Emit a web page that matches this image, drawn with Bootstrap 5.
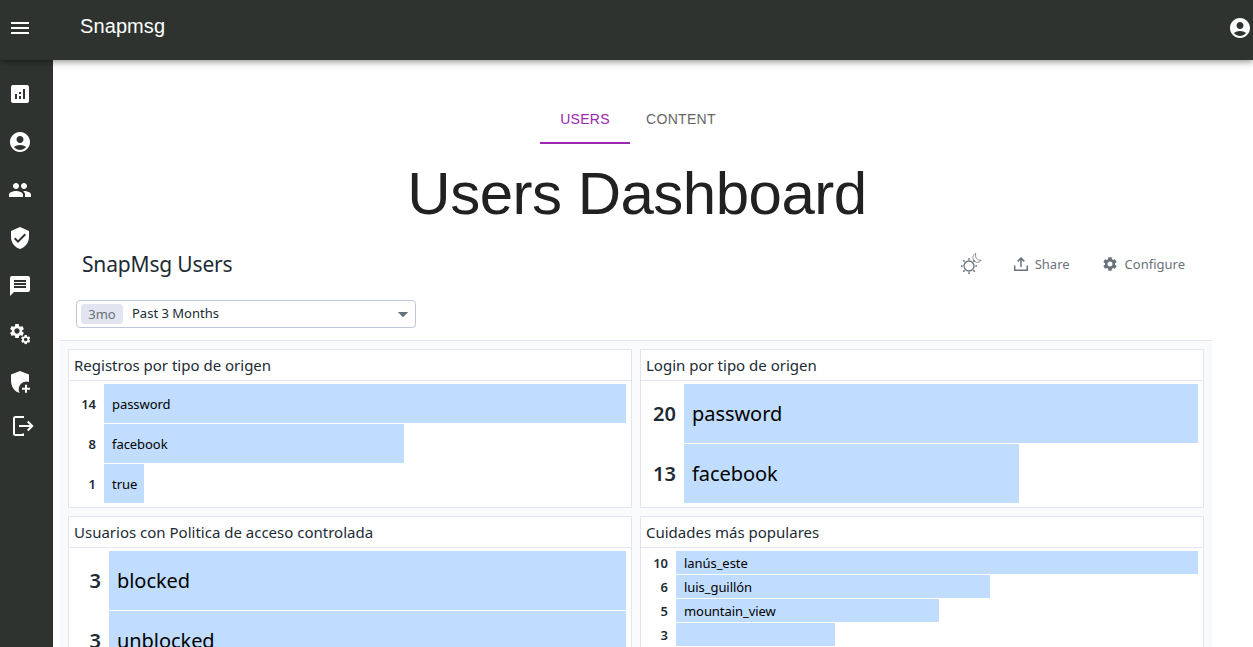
<!DOCTYPE html>
<html lang="es">
<head>
<meta charset="utf-8">
<meta name="viewport" content="width=device-width, initial-scale=1">
<title>Snapmsg</title>
<link href="https://cdn.jsdelivr.net/npm/bootstrap@5.3.0/dist/css/bootstrap.min.css" rel="stylesheet">
<style>
  body { font-family: "Liberation Sans", Arial, sans-serif; height: 647px; overflow: hidden; background: #fff; color: #212121; }
  .topbar { height: 60px; background: #2e332f; box-shadow: 0 2px 4px -1px rgba(0,0,0,.2), 0 4px 5px rgba(0,0,0,.14), 0 1px 10px rgba(0,0,0,.12); z-index: 2; padding: 0 1px 0 8px; }
  .topbar svg, .rail svg { width: 24px; height: 24px; fill: #fff; flex: none; display: block; }
  .topbar svg { margin-top: -4px; }
  .brand-title { font-size: 20px; line-height: 24px; letter-spacing: .1px; margin: -9px auto 0 48px; color: #fff; }
  .rail { width: 53px; background: #2e332f; padding: 22px 0 0 8px; gap: 24px; }
  .rail svg.exit { margin-top: -4px; overflow: visible; }
  .tab-item { font-size: 14px; line-height: 17.5px; letter-spacing: .3px; width: 90px; height: 50px; color: #666; border-bottom: 2px solid transparent; padding-top: 17px; text-align: center; }
  .tab-item.current { color: #9c27b0; border-color: #9c27b0; }
  .tab-item.wide { width: 102px; }
  .tabs { padding: 34px 0 0 487px; }
  .headline { font-size: 60px; line-height: 72px; font-weight: 400; letter-spacing: -.5px; margin: 14px 0 -1px; width: 1168px; text-align: center; }
  .dash { font-family: "Noto Sans", sans-serif; width: 1152px; margin-left: 7px; color: #1c2b34; }
  .dash-head { height: 112px; padding: 20px 27px 0 16px; border-bottom: 1px solid #e2e5ef; }
  .dash-name { font-size: 21px; line-height: 30px; letter-spacing: -.17px; padding-left: 6px; margin: 0; font-weight: 400; }
  .tool { font-size: 13px; line-height: 20px; color: #68727b; }
  .tool svg { display: block; overflow: visible; margin-right: 7px; }
  .tool.config { margin-left: 33px; }
  .tool.config svg { margin-right: 8px; }
  .daynight { display: block; overflow: visible; margin-right: 32px; }
  .range { width: 340px; height: 28px; border: 1px solid #c0c5de; border-radius: 4px; margin-top: 21px; padding: 0 7px 0 4px; font-size: 13px; }
  .range .tag { background: #e2e5ef; color: #68727b; border-radius: 4px; width: 42px; height: 20px; line-height: 20px; text-align: center; margin-right: 9px; }
  .board { background: #f9fafc; padding: 8px; display: grid; grid-template-columns: 564px 564px; grid-template-rows: 159px 159px; gap: 8px; height: 400px; }
  .panel { background: #fff; border: 1px solid #e2e5ef; padding-bottom: 3px; overflow: hidden; }
  .panel h2 { font-size: 15px; line-height: 30px; height: 31px; font-weight: 400; border-bottom: 1px solid #e2e5ef; margin: 0 0 3px; padding: 0 5px; }
  .rank { display: grid; grid-template-columns: var(--num) 1fr; height: var(--h); font-size: var(--fs); padding-right: 5px; line-height: var(--lh); }
  .rank b { font-weight: 600; text-align: right; padding-right: 8px; }
  .fillbar { background: #c0ddff; color: #000; height: calc(var(--h) - 1px); padding-left: 8px; white-space: nowrap; letter-spacing: -.06px; }
  .s40 { --h: 40px; --fs: 13px; --num: 35px; --lh: 41px; }
  .s60 { --h: 60px; --fs: 20px; --num: 43px; --lh: 59px; }
  .s60.slim { --num: 40px; }
  .s24 { --h: 24px; --fs: 13px; --num: 35px; --lh: 25px; }
</style>
</head>
<body class="d-flex flex-column">
<svg width="0" height="0" class="position-absolute" aria-hidden="true">
  <symbol id="user" viewBox="0 0 24 24"><path d="M12 2C6.48 2 2 6.48 2 12s4.48 10 10 10 10-4.48 10-10S17.52 2 12 2zm0 4c1.93 0 3.5 1.57 3.5 3.5S13.93 13 12 13s-3.5-1.57-3.5-3.5S10.07 6 12 6zm0 14c-2.03 0-4.43-.82-6.14-2.88C7.55 15.8 9.68 15 12 15s4.45.8 6.14 2.12C16.43 19.18 14.03 20 12 20z"/></symbol>
  <symbol id="gear" viewBox="2 2 20 20"><path d="M19.14 12.94c.04-.3.06-.61.06-.94 0-.32-.02-.64-.07-.94l2.03-1.58c.18-.14.23-.41.12-.61l-1.92-3.32c-.12-.22-.37-.29-.59-.22l-2.39.96c-.5-.38-1.03-.7-1.62-.94l-.36-2.54c-.04-.24-.24-.41-.48-.41h-3.84c-.24 0-.43.17-.47.41l-.36 2.54c-.59.24-1.13.57-1.62.94l-2.39-.96c-.22-.08-.47 0-.59.22L2.74 8.87c-.12.21-.08.47.12.61l2.03 1.58c-.05.3-.09.63-.09.94s.02.64.07.94l-2.03 1.58c-.18.14-.23.41-.12.61l1.92 3.32c.12.22.37.29.59.22l2.39-.96c.5.38 1.03.7 1.62.94l.36 2.54c.05.24.24.41.48.41h3.84c.24 0 .44-.17.47-.41l.36-2.54c.59-.24 1.13-.56 1.62-.94l2.39.96c.22.08.47 0 .59-.22l1.92-3.32c.12-.22.07-.47-.12-.61zM12 15.6c-1.98 0-3.6-1.62-3.6-3.6s1.62-3.6 3.6-3.6 3.6 1.62 3.6 3.6-1.62 3.6-3.6 3.6z"/></symbol>
</svg>

<header class="topbar d-flex align-items-center position-relative flex-shrink-0">
  <svg viewBox="0 0 24 24"><path d="M3 18h18v-2H3v2zm0-5h18v-2H3v2zm0-7v2h18V6H3z"/></svg>
  <div class="brand-title">Snapmsg</div>
  <svg><use href="#user"/></svg>
</header>

<div class="d-flex flex-grow-1 overflow-hidden">
  <nav class="rail d-flex flex-column flex-shrink-0">
    <svg viewBox="0 0 24 24"><path d="M19 3H5c-1.1 0-2 .9-2 2v14c0 1.1.9 2 2 2h14c1.1 0 2-.9 2-2V5c0-1.1-.9-2-2-2zM9 17H7v-5h2v5zm4 0h-2v-3h2v3zm0-5h-2v-2h2v2zm4 5h-2V7h2v10z"/></svg>
    <svg><use href="#user"/></svg>
    <svg viewBox="0 0 24 24"><path d="M16 11c1.66 0 2.99-1.34 2.99-3S17.66 5 16 5c-1.66 0-3 1.34-3 3s1.34 3 3 3zm-8 0c1.66 0 2.99-1.34 2.99-3S9.66 5 8 5C6.34 5 5 6.34 5 8s1.34 3 3 3zm0 2c-2.33 0-7 1.17-7 3.5V19h14v-2.5c0-2.33-4.67-3.5-7-3.5zm8 0c-.29 0-.62.02-.97.05 1.16.84 1.97 1.97 1.97 3.45V19h6v-2.5c0-2.33-4.67-3.5-7-3.5z"/></svg>
    <svg viewBox="0 0 24 24"><path d="M12 1L3 5v6c0 5.55 3.84 10.74 9 12 5.16-1.26 9-6.45 9-12V5l-9-4zm-2 16l-4-4 1.41-1.41L10 14.17l6.59-6.59L18 9l-8 8z"/></svg>
    <svg viewBox="0 0 24 24"><path d="M20 2H4c-1.1 0-1.99.9-1.99 2L2 22l4-4h14c1.1 0 2-.9 2-2V4c0-1.1-.9-2-2-2zm-2 12H6v-2h12v2zm0-3H6V9h12v2zm0-3H6V6h12v2z"/></svg>
    <svg viewBox="0 0 24 24"><use href="#gear" x="1.7" y="1.7" width="14.6" height="14.6"/><use href="#gear" x="12.9" y="12.8" width="9.6" height="9.6"/></svg>
    <svg viewBox="0 0 24 24"><path d="M12 1L3 4.5V11c0 5.6 3.8 10.8 8.7 12A7.7 7.7 0 0 1 21 12V4.500z"/><path d="M14 17.7h3V14.700h2v3h3v2h-3v3h-2v-3h-3z"/></svg>
    <svg class="exit" viewBox="0 0 24 24"><path d="M15 4V3H7.500Q6 3 6 4.500v15Q6 21 7.500 21H15v-1.500M11 12h13M19.700 7.500 24.200 12l-4.500 4.500" fill="none" stroke="#fff" stroke-width="2"/></svg>
  </nav>

  <main class="flex-grow-1 overflow-hidden">
    <div class="tabs d-flex">
      <div class="tab-item current">USERS</div>
      <div class="tab-item wide">CONTENT</div>
    </div>
    <h1 class="headline">Users Dashboard</h1>

    <section class="dash">
      <div class="dash-head">
        <div class="d-flex align-items-center">
          <h2 class="dash-name me-auto">SnapMsg Users</h2>
          <svg class="daynight" width="22" height="22" viewBox="0 0 22 22" fill="none" stroke="#68727b"><circle cx="9" cy="13" r="5" stroke-width="1.3"/><path d="M9 5v1.7M9 19.3V21M1 13h1.7M15.3 13H17M3.3 7.3l1.3 1.3M13.4 17.4l1.3 1.3M3.3 18.700l1.3-1.3M13.4 8.600l1.3-1.3" stroke-width="1.5"/><path d="M15.800.2c-2.600 1.500-3.900 5-1.700 7.600 1.800 2.200 5.500 2 7-.6-3.600.7-6.600-2.800-5.300-7z" stroke-width=".8"/></svg>
          <div class="tool d-flex align-items-center">
            <svg width="14" height="14" viewBox="0 0 14 14" fill="none" stroke="#68727b" stroke-width="1.5"><path d="M.7 8.500v4.800h12.600V8.500M7 10V1.200M3.700 4.400 7 1.100l3.300 3.300"/></svg>Share
          </div>
          <div class="tool config d-flex align-items-center">
            <svg width="14" height="14" fill="#68727b"><use href="#gear"/></svg>Configure
          </div>
        </div>
        <div class="range d-flex align-items-center">
          <span class="tag">3mo</span><span class="me-auto">Past 3 Months</span>
          <svg width="10" height="5" viewBox="0 0 10 5"><path d="M.5 0h9q.8 0 .2.600L5.600 4.700q-.6.500-1.200 0L.3.600Q-.3 0 .5 0z" fill="#68727b"/></svg>
        </div>
      </div>
      <div class="board">
        <article class="panel">
          <h2>Registros por tipo de origen</h2>
          <div class="rank s40"><b>14</b><div class="fillbar" style="width:100%">password</div></div>
          <div class="rank s40"><b>8</b><div class="fillbar" style="width:57.4%">facebook</div></div>
          <div class="rank s40"><b>1</b><div class="fillbar" style="width:7.7%">true</div></div>
        </article>
        <article class="panel">
          <h2>Login por tipo de origen</h2>
          <div class="rank s60"><b>20</b><div class="fillbar" style="width:100%">password</div></div>
          <div class="rank s60"><b>13</b><div class="fillbar" style="width:65.2%">facebook</div></div>
        </article>
        <article class="panel">
          <h2>Usuarios con Politica de acceso controlada</h2>
          <div class="rank s60 slim"><b>3</b><div class="fillbar" style="width:100%">blocked</div></div>
          <div class="rank s60 slim"><b>3</b><div class="fillbar" style="width:100%">unblocked</div></div>
        </article>
        <article class="panel">
          <h2>Cuidades más populares</h2>
          <div class="rank s24"><b>10</b><div class="fillbar" style="width:100%">lanús_este</div></div>
          <div class="rank s24"><b>6</b><div class="fillbar" style="width:60.2%">luis_guillón</div></div>
          <div class="rank s24"><b>5</b><div class="fillbar" style="width:50.3%">mountain_view</div></div>
          <div class="rank s24"><b>3</b><div class="fillbar" style="width:30.4%"></div></div>
        </article>
      </div>
    </section>
  </main>
</div>
<script src="https://cdn.jsdelivr.net/npm/bootstrap@5.3.0/dist/js/bootstrap.bundle.min.js"></script>
</body>
</html>
